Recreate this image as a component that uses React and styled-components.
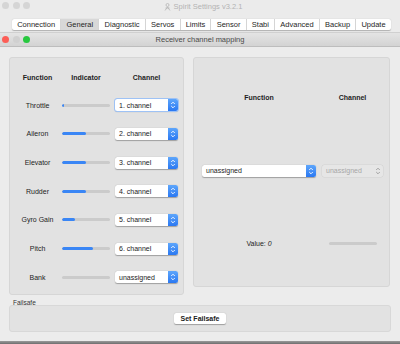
import styled, { createGlobalStyle } from "styled-components"

const GlobalStyle = createGlobalStyle`
  html, body { margin: 0; padding: 0; background: #ececec; }
  body { font-family: "Liberation Sans", Arial, sans-serif; }
`

const tabs = ["Connection", "General", "Diagnostic", "Servos", "Limits", "Sensor", "Stabi", "Advanced", "Backup", "Update"]

const rows = [
  { name: "Throttle", level: 4, channel: "1. channel", focus: true },
  { name: "Aileron", level: 50, channel: "2. channel" },
  { name: "Elevator", level: 50, channel: "3. channel" },
  { name: "Rudder", level: 50, channel: "4. channel" },
  { name: "Gyro Gain", level: 27, channel: "5. channel" },
  { name: "Pitch", level: 65, channel: "6. channel" },
  { name: "Bank", level: 0, channel: "unassigned" },
]

function Stepper({ disabled }) {
  return (
    <Arrows disabled={disabled}>
      <svg width="6" height="8" viewBox="0 0 6 8">
        <path d="M1.2 3 L3 1.2 L4.8 3 M1.2 5 L3 6.8 L4.8 5" fill="none"
          stroke={disabled ? "#9a9a9a" : "#fff"} strokeWidth="0.9" />
      </svg>
    </Arrows>
  )
}

function Select({ value, width, disabled, focus, end }) {
  return (
    <SelectBox width={width} disabled={disabled} focus={focus} end={end}>
      <span>{value}</span>
      <Stepper disabled={disabled} />
    </SelectBox>
  )
}

export default function App() {
  return (
    <Screen>
      <GlobalStyle />
      <TitleBar>
        <Lights>
          <Light color="#d5d5d5" />
          <Light color="#d5d5d5" />
          <Light color="#d5d5d5" />
        </Lights>
        <Title>
          <svg width="7" height="8" viewBox="0 0 7 8">
            <circle cx="3.5" cy="2" r="1.5" fill="none" stroke="#b5b5b5" strokeWidth="0.8" />
            <path d="M1 7.5 L3.5 4 L6 7.5 M1.5 5 L5.5 5" fill="none" stroke="#b5b5b5" strokeWidth="0.8" />
          </svg>
          Spirit Settings v3.2.1
        </Title>
      </TitleBar>

      <TabRow>
        <Tabs>
          {tabs.map((t) => (
            <Tab key={t} active={t === "General"}>{t}</Tab>
          ))}
        </Tabs>
      </TabRow>

      <WindowBar>
        <Lights>
          <SmallLight color="#fc5e57" />
          <SmallLight color="#d0d0d0" />
          <SmallLight color="#27c83f" />
        </Lights>
        <BarTitle>Receiver channel mapping</BarTitle>
      </WindowBar>

      <Content>
        <Panels>
          <LeftPanel>
            <Head>Function</Head>
            <Head>Indicator</Head>
            <Head indent>Channel</Head>
            {rows.map((r) => (
              <Row key={r.name}>
                <Label>{r.name}</Label>
                <Track>
                  <Fill style={{ width: `${r.level}%` }} />
                </Track>
                <Select value={r.channel} focus={r.focus} end />
              </Row>
            ))}
          </LeftPanel>

          <RightPanel>
            <Head>Function</Head>
            <Head>Channel</Head>
            <Select value="unassigned" width="114px" />
            <Select value="unassigned" width="61px" disabled />
            <Value>Value: <i>0</i></Value>
            <Track width="48px" />
          </RightPanel>
        </Panels>

        <GroupLabel>Failsafe</GroupLabel>
        <Group>
          <Button>Set Failsafe</Button>
        </Group>
      </Content>
      <BottomEdge />
    </Screen>
  )
}

const Screen = styled.div`
width: 400px;
height: 344px;
display: flex;
flex-direction: column;
background: #ececec;
overflow: hidden;
`

const TitleBar = styled.div`
height: 17px;
flex-shrink: 0;
display: flex;
align-items: flex-start;
position: relative;
background: #ebebeb;
`

const Lights = styled.div`
display: flex;
align-items: center;
gap: 3.5px;
padding-left: 2px;
`

const Light = styled.div`
width: 7px;
height: 7px;
margin-top: 2px;
border-radius: 50%;
background: ${(p) => p.color};
`

const SmallLight = styled.div`
width: 7px;
height: 7px;
border-radius: 50%;
background: ${(p) => p.color};
`

const Title = styled.div`
position: absolute;
left: 0;
right: 0;
top: 2px;
display: flex;
justify-content: center;
align-items: center;
gap: 3px;
font-size: 7.5px;
color: #b3b3b3;
padding-left: 6px;
`

const TabRow = styled.div`
height: 15px;
flex-shrink: 0;
padding: 2px 0 0 12px;
box-sizing: border-box;
background: #ebebeb;
display: flex;
align-items: flex-start;
`

const Tabs = styled.div`
display: flex;
height: 11px;
background: #fff;
border-radius: 2px;
box-shadow: 0 0.5px 1px rgba(0, 0, 0, 0.25);
overflow: hidden;
`

const Tab = styled.div`
padding: 0 5.2px;
font-size: 7.5px;
line-height: 11px;
color: #262626;
white-space: nowrap;
background: ${(p) => (p.active ? "#d8d8d8" : "transparent")};
border-right: 0.5px solid #d5d5d5;
&:last-child { border-right: none; }
`

const WindowBar = styled.div`
height: 15px;
flex-shrink: 0;
display: flex;
align-items: center;
position: relative;
background: linear-gradient(#e4e4e4, #d3d3d3);
border-top: 0.5px solid #d0d0d0;
border-bottom: 0.5px solid #bdbdbd;
box-sizing: border-box;
`

const BarTitle = styled.div`
position: absolute;
left: 0;
right: 0;
text-align: center;
font-size: 7.5px;
color: #4a4a4a;
`

const Content = styled.div`
flex: 1;
padding: 10px 9px 0 9px;
display: flex;
flex-direction: column;
`

const Panels = styled.div`
display: flex;
align-items: flex-start;
gap: 9px;
`

const LeftPanel = styled.div`
width: 175px;
height: 238px;
box-sizing: border-box;
padding: 6px 0 0 3px;
background: #e2e2e2;
border: 0.5px solid #d6d6d6;
border-radius: 3px;
display: grid;
grid-template-columns: 49px 48px 68px;
grid-template-rows: 27px repeat(7, 28.67px);
align-items: center;
`

const Row = styled.div`
display: contents;
`

const Head = styled.div`
text-align: center;
font-size: 7px;
font-weight: bold;
color: #1e1e1e;
padding-left: ${(p) => (p.indent ? "5px" : "0")};
`

const Label = styled.div`
text-align: center;
font-size: 7px;
color: #222;
`

const Track = styled.div`
width: ${(p) => p.width || "48px"};
height: 3px;
border-radius: 2px;
background: #cbcbcb;
justify-self: center;
overflow: hidden;
`

const Fill = styled.div`
height: 100%;
background: #3a86f5;
border-radius: 2px;
`

const SelectBox = styled.div`
width: ${(p) => p.width || "63px"};
height: 12px;
box-sizing: border-box;
justify-self: ${(p) => (p.end ? "end" : "center")};
display: flex;
align-items: center;
justify-content: space-between;
border-radius: 2.5px;
background: ${(p) => (p.disabled ? "#e6e6e6" : "#fff")};
box-shadow: ${(p) =>
  p.focus
    ? "0 0 0 1px #9ec2f5, 0 0.5px 1px rgba(0,0,0,0.3)"
    : p.disabled
    ? "0 0 0 0.5px #d2d2d2"
    : "0 0.5px 1px rgba(0,0,0,0.3)"};
overflow: hidden;
span {
  padding-left: 4px;
  font-size: 7px;
  color: ${(p) => (p.disabled ? "#a7a7a7" : "#1a1a1a")};
}
`

const Arrows = styled.div`
width: 10px;
height: 100%;
display: flex;
align-items: center;
justify-content: center;
background: ${(p) => (p.disabled ? "transparent" : "linear-gradient(#5ea6fb, #2a78f2)")};
`

const RightPanel = styled.div`
width: 197px;
height: 230px;
box-sizing: border-box;
padding: 3px 0 0 8px;
background: #e2e2e2;
border: 0.5px solid #d6d6d6;
border-radius: 3px;
display: grid;
grid-template-columns: 114px 61px;
grid-template-rows: repeat(3, 73px);
column-gap: 6px;
align-items: center;
justify-items: center;
`

const Value = styled.div`
font-size: 7px;
color: #222;
`

const GroupLabel = styled.div`
margin-top: 4px;
height: 8px;
line-height: 8px;
padding-left: 4px;
font-size: 6.5px;
color: #333;
`

const Group = styled.div`
margin-top: -2px;
height: 27px;
background: #e2e2e2;
border: 0.5px solid #d8d8d8;
border-radius: 3px;
box-sizing: border-box;
display: flex;
align-items: center;
justify-content: center;
`

const Button = styled.div`
width: 52px;
height: 11px;
background: #fff;
border-radius: 2px;
box-shadow: 0 0.5px 1px rgba(0, 0, 0, 0.3);
font-size: 7px;
font-weight: 600;
color: #222;
text-align: center;
line-height: 11px;
`

const BottomEdge = styled.div`
height: 3px;
flex-shrink: 0;
background: linear-gradient(#9a9a9a, #6e6e6e);
`
